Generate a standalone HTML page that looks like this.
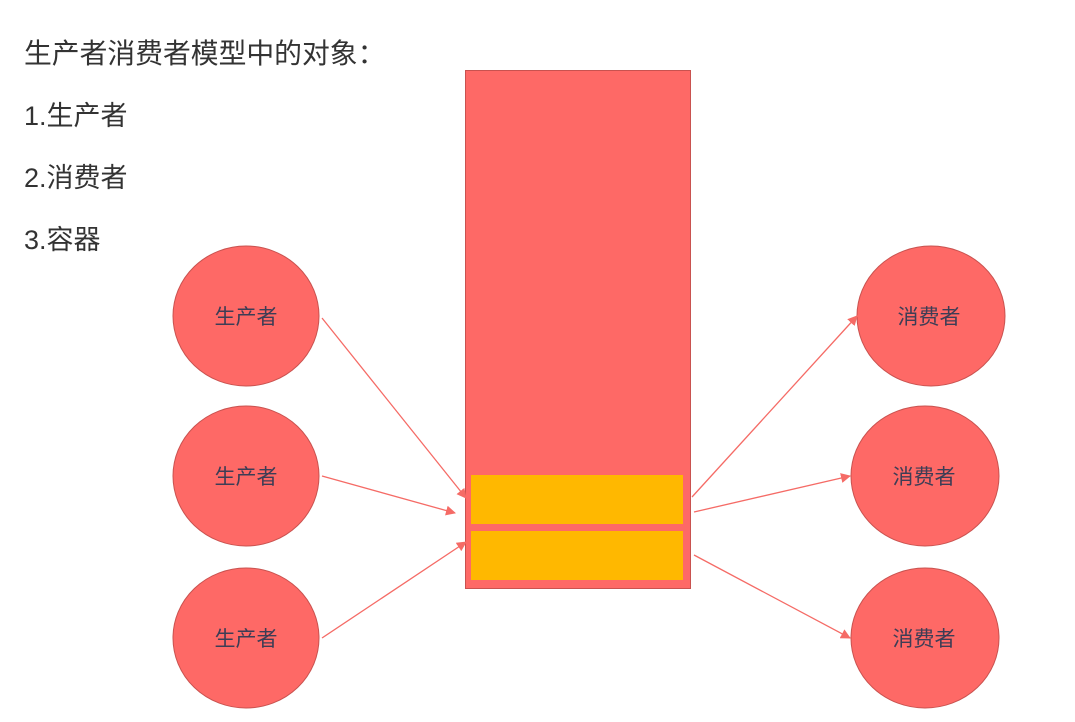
<!DOCTYPE html>
<html><head><meta charset="utf-8"><style>
body{margin:0;width:1075px;height:722px;background:#fff;overflow:hidden;position:relative;font-family:"Liberation Sans","Noto Sans CJK SC",sans-serif;}
.t{position:absolute;left:24px;font-size:27px;color:#333;line-height:30px;}
</style></head><body>
<div class="t" style="top:39px;font-size:27.8px">生产者消费者模型中的对象：</div>
<div class="t" style="top:101px">1.生产者</div>
<div class="t" style="top:163px">2.消费者</div>
<div class="t" style="top:225px">3.容器</div>
<svg width="1075" height="722" style="position:absolute;left:0;top:0">
<defs><marker id="a" viewBox="0 0 10 10" refX="9" refY="5" markerWidth="10" markerHeight="10" markerUnits="userSpaceOnUse" orient="auto"><path d="M0,0L10,5L0,10z" fill="#f56b66"/></marker></defs>
<rect x="465.5" y="70.5" width="225" height="518" fill="#fe6966" stroke="#c9524f"/>
<rect x="471" y="475" width="212" height="49" fill="#ffb800"/>
<rect x="471" y="531" width="212" height="49" fill="#ffb800"/>
<g fill="#fe6966" stroke="#c9524f" stroke-width="1">
<ellipse cx="246" cy="316" rx="73" ry="70"/>
<ellipse cx="246" cy="476" rx="73" ry="70"/>
<ellipse cx="246" cy="638" rx="73" ry="70"/>
<ellipse cx="931" cy="316" rx="74" ry="70"/>
<ellipse cx="925" cy="476" rx="74" ry="70"/>
<ellipse cx="925" cy="638" rx="74" ry="70"/>
</g>
<g stroke="#f56b66" stroke-width="1.3" fill="none" marker-end="url(#a)">
<line x1="322" y1="318" x2="466" y2="498"/>
<line x1="322" y1="476" x2="455" y2="513"/>
<line x1="322" y1="638" x2="466" y2="542"/>
<line x1="692" y1="497" x2="857" y2="316"/>
<line x1="694" y1="512" x2="850" y2="476"/>
<line x1="694" y1="555" x2="850" y2="638"/>
</g>
<g font-family="Liberation Sans, Noto Sans CJK SC, sans-serif" font-size="21" fill="#3d3d55" text-anchor="middle">
<text x="246" y="324">生产者</text>
<text x="246" y="484">生产者</text>
<text x="246" y="646">生产者</text>
<text x="929" y="324">消费者</text>
<text x="924" y="484">消费者</text>
<text x="924" y="646">消费者</text>
</g>
</svg>
</body></html>
